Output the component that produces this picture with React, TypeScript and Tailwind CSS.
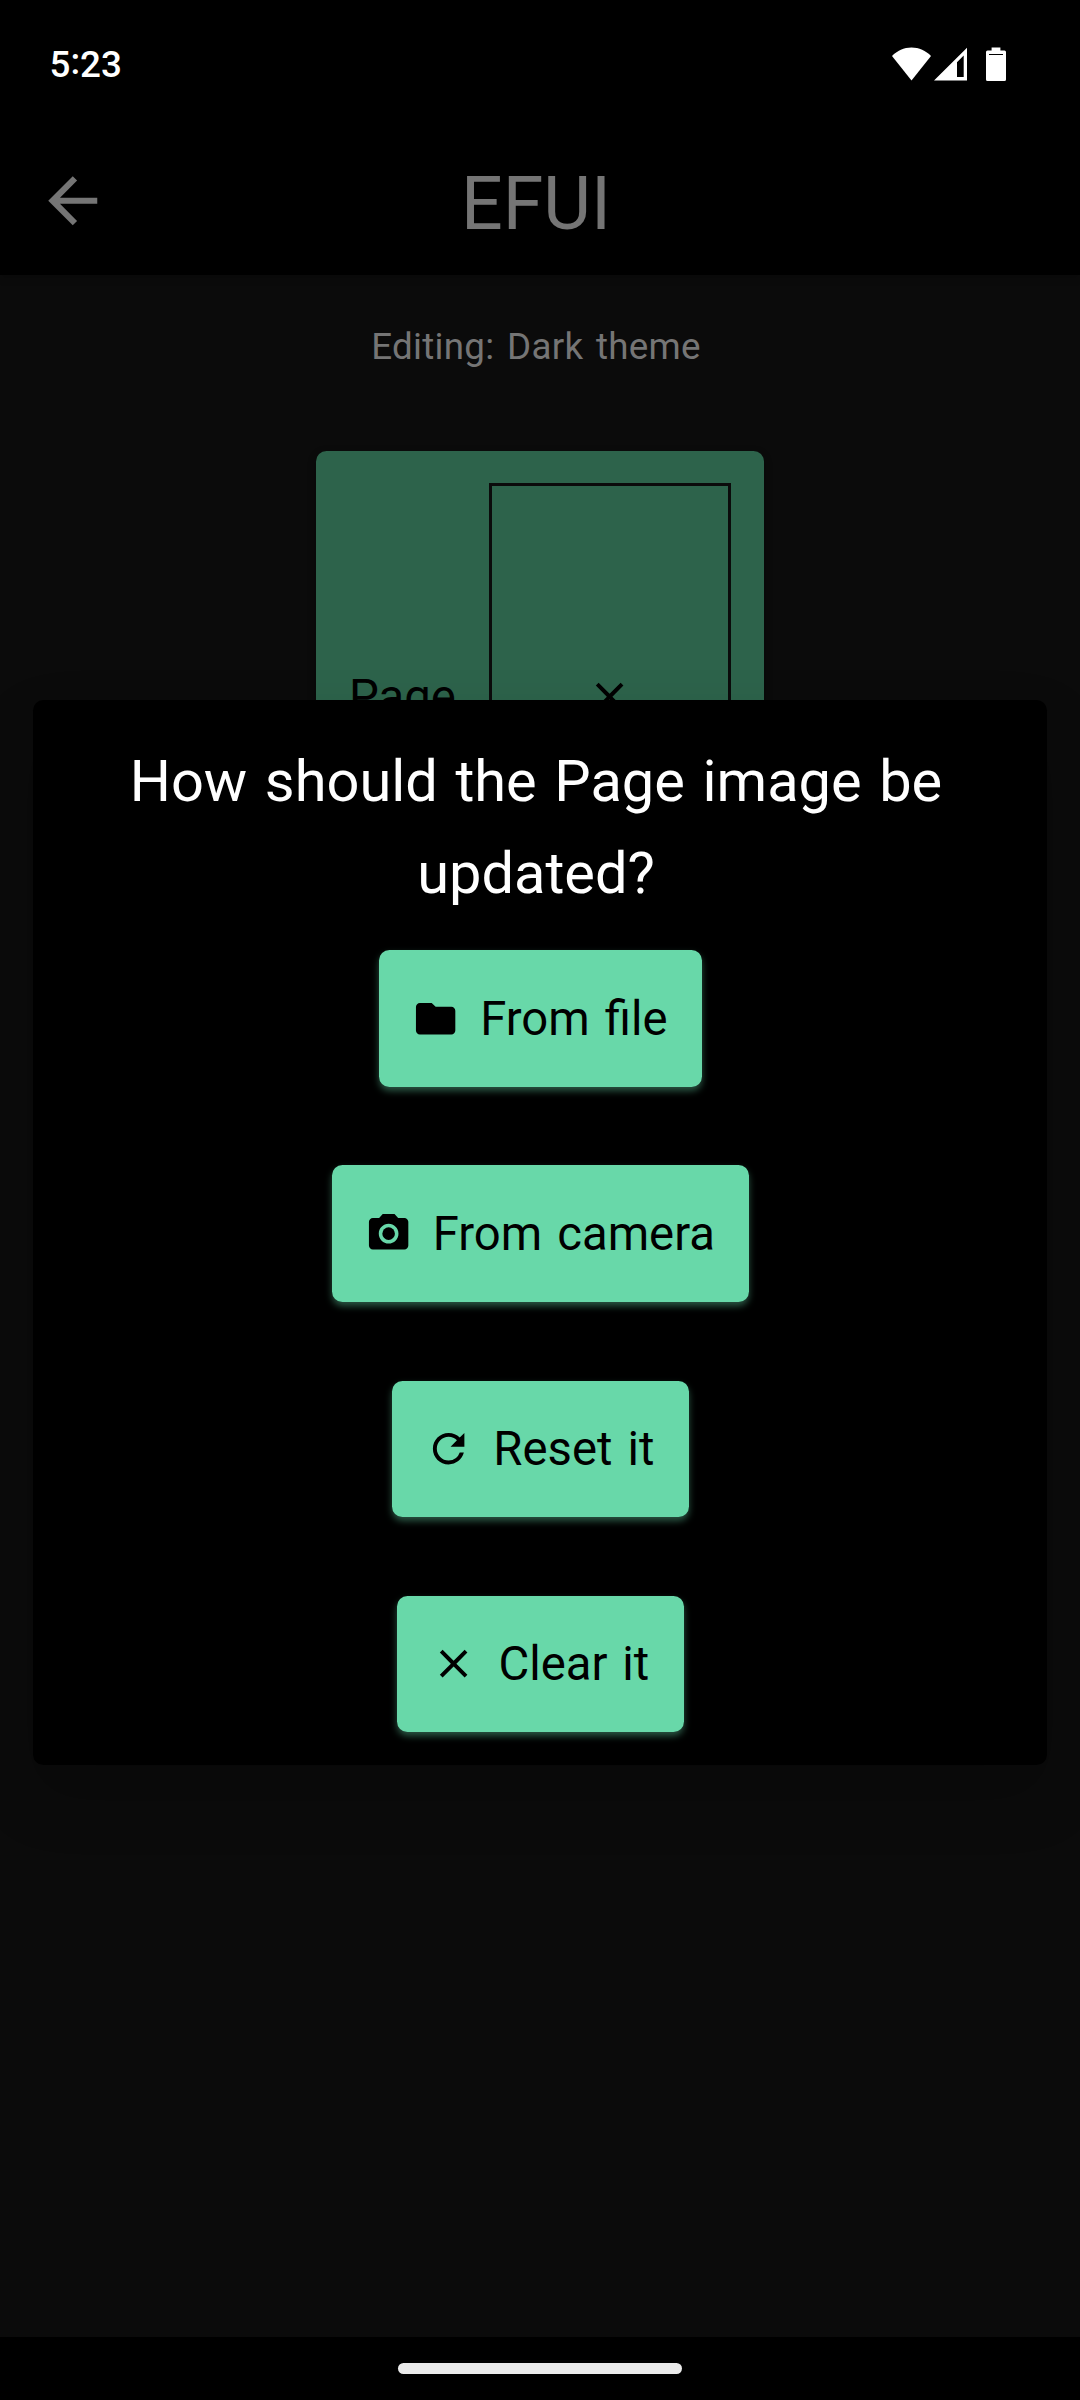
import type { ReactNode } from "react";
import { MdArrowBack, MdCameraAlt, MdClose, MdFolder, MdRefresh } from "react-icons/md";

function StatusBar() {
  return (
    <div className="flex h-[128px] items-center justify-between bg-black pl-[49.5px] pr-[74px] text-white">
      <span className="pt-[2px] text-[36.75px] leading-none font-medium">
        5<span className="relative -top-[3px]">:</span>23
      </span>
      <div className="flex items-center">
        <svg className="h-[34px] w-[39px]" viewBox="0 0 39 34" fill="currentColor">
          <path d="M0 9C5.200 3.600 12 .5 19.500 .5S33.800 3.600 39 9L19.500 33.500Z" />
        </svg>
        <svg className="ml-[3px] h-[34px] w-[33px]" viewBox="0 0 33 34" fill="currentColor">
          <path fillRule="evenodd" d="M33 .8V33.500H0ZM29.700 8.500L23 15.200V30H29.700Z" />
        </svg>
        <svg className="ml-[19px] h-[34px] w-[20px]" viewBox="0 0 20 34" fill="currentColor">
          <path
            fillRule="evenodd"
            d="M5.600 .5H14.400V3.500H18.500Q20 3.500 20 5V32.500Q20 34 18.500 34H1.500Q0 34 0 32.500V5Q0 3.500 1.500 3.500H5.600ZM3 6.900V8.100H17V6.900Z"
          />
        </svg>
      </div>
    </div>
  );
}

function Header() {
  return (
    <header className="relative z-10 grid h-[147px] grid-cols-[147px_1fr_147px] bg-black pr-[8px] text-[#757575] shadow-[0_3px_8px_rgba(0,0,0,0.2)]">
      <MdArrowBack className="mt-[36px] ml-[36px] size-[73.5px]" />
      <h1 className="pt-[40px] text-center text-[73.5px] leading-[73.5px]">EFUI</h1>
    </header>
  );
}

function PageImageCard() {
  return (
    <div className="mt-[83px] ml-[316px] flex h-[492px] w-[448px] items-center justify-between rounded-[10.5px] bg-[#2d634b] pr-[33px] pl-[33px] text-black shadow-[0_3px_8px_rgba(0,0,0,0.3)]">
      <span className="pt-[2px] text-[47.25px] leading-none">Page</span>
      <div className="flex h-[428px] w-[242px] items-center justify-center border-[3px] border-[#0b0b0b]">
        <MdClose className="size-[47.25px]" />
      </div>
    </div>
  );
}

function ActionButton({ icon, label }: { icon: ReactNode; label: string }) {
  return (
    <button className="flex h-[136.500px] items-center gap-[21px] rounded-[10.5px] bg-[#68d8a9] pr-[34.500px] pl-[33px] text-[47.25px] leading-none whitespace-nowrap text-black shadow-[0_4px_7px_rgba(105,216,169,0.4)] [word-spacing:3.25px]">
      {icon}
      <span className="pt-[2px]">{label}</span>
    </button>
  );
}

function UpdateDialog() {
  return (
    <section className="mx-[33px] mt-[700px] flex h-[1064.5px] flex-col items-center rounded-[10.5px] bg-black pt-[35px] shadow-[0_30px_60px_rgba(0,0,0,0.22)]">
      <h2 className="w-[900px] pr-[8px] text-center text-[57.75px] leading-[92.400px] text-white [word-spacing:3.25px]">
        How should the Page image be updated?
      </h2>
      <div className="mt-[30.200px] ml-[1px] flex flex-col items-center gap-[78.750px]">
        <ActionButton icon={<MdFolder className="size-[47.25px]" />} label="From file" />
        <ActionButton icon={<MdCameraAlt className="size-[47.25px]" />} label="From camera" />
        <ActionButton icon={<MdRefresh className="size-[47.25px]" />} label="Reset it" />
        <ActionButton icon={<MdClose className="size-[47.25px]" />} label="Clear it" />
      </div>
    </section>
  );
}

export default function App() {
  return (
    <div className="relative flex h-[2400px] w-[1080px] flex-col overflow-hidden bg-black font-[Roboto,sans-serif]">
      <StatusBar />
      <Header />
      <main className="flex-1 bg-[#0b0b0b]">
        <p className="pt-[50px] pr-[8px] text-center text-[36.75px] leading-[43px] tracking-[0.28px] text-[#757575] [word-spacing:3.25px]">
          Editing: Dark theme
        </p>
        <PageImageCard />
      </main>
      <footer className="flex h-[63px] justify-center bg-black pt-[26px]">
        <div className="h-[11px] w-[284px] rounded-full bg-[#ebebeb]" />
      </footer>
      <div className="absolute inset-x-0 top-0 z-20">
        <UpdateDialog />
      </div>
    </div>
  );
}
